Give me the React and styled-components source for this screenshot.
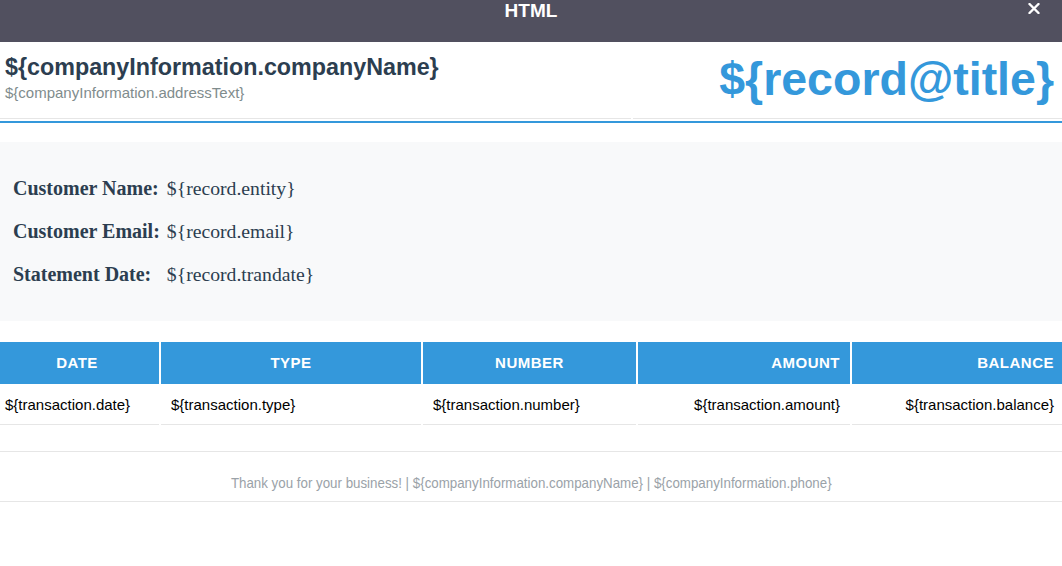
import React from "react";
import styled, { createGlobalStyle } from "styled-components";

const Global = createGlobalStyle`
  html, body { margin: 0; padding: 0; background: #ffffff; }
  body { font-family: "Liberation Sans", Arial, sans-serif; overflow: hidden; }
  * { box-sizing: border-box; }
`;

const Page = styled.div`
  width: 1062px;
  height: 566px;
  overflow: hidden;
  background: #ffffff;
`;

const TitleBar = styled.div`
  height: 42px;
  background: #51505f;
  display: grid;
  grid-template-columns: 1fr auto 1fr;
  align-items: start;
`;

const TitleText = styled.div`
  grid-column: 2;
  color: #ffffff;
  font-weight: 700;
  font-size: 19px;
  line-height: 22px;
`;

const CloseButton = styled.button`
  grid-column: 3;
  justify-self: end;
  margin: 3px 22px 0 0;
  padding: 0;
  border: 0;
  background: transparent;
  width: 12px;
  height: 11px;
  display: flex;
  cursor: pointer;
`;

const Header = styled.div`
  display: grid;
  grid-template-columns: 631px 1fr;
  column-gap: 2px;
  padding-bottom: 2px;
  border-bottom: 2px solid #3498db;
`;

const HeaderCell = styled.div`
  padding: 11px ${(p) => (p.$right ? "8px" : "5px")} ${(p) => (p.$right ? "13px" : "15px")};
  border-bottom: 1px solid #e6e6e6;
  text-align: ${(p) => (p.$right ? "right" : "left")};
`;

const CompanyName = styled.div`
  font-size: 23.3px;
  line-height: 28px;
  font-weight: 700;
  color: #2c3e50;
`;

const Address = styled.div`
  margin-top: 2px;
  font-size: 15px;
  line-height: 20px;
  color: #7f8c8d;
`;

const DocTitle = styled.div`
  font-size: 46.5px;
  line-height: 52px;
  font-weight: 700;
  color: #3498db;
`;

const InfoPanel = styled.div`
  margin-top: 19px;
  background: #f8f9fa;
  padding: 25px 13px;
  display: grid;
  grid-template-columns: max-content auto;
  column-gap: 7px;
  grid-auto-rows: 43px;
  align-items: center;
  font-family: "Liberation Serif", "Times New Roman", serif;
  color: #2c3e50;
`;

const InfoLabel = styled.div`
  font-size: 20px;
  font-weight: 700;
`;

const InfoValue = styled.div`
  font-size: 19.7px;
  font-weight: 400;
`;

const TableWrap = styled.div`
  margin: 21px -2px 0 -5px;
  display: grid;
  grid-template-columns: 164px 260px 213px 212px 1fr;
  gap: 2px;
`;

const HeadCell = styled.div`
  height: 42px;
  padding: 0 10px 1px;
  background: #3498db;
  color: #ffffff;
  font-weight: 700;
  font-size: 15px;
  letter-spacing: 0.5px;
  text-transform: uppercase;
  display: flex;
  align-items: center;
  justify-content: ${(p) => (p.$align === "right" ? "flex-end" : "center")};
`;

const DataCell = styled.div`
  padding: 10px;
  font-size: 15px;
  line-height: 18px;
  color: #000000;
  border-bottom: 1px solid #e6e6e6;
  text-align: ${(p) => p.$align || "left"};
`;

const Footer = styled.div`
  margin-top: 26px;
  border-top: 1px solid #e6e6e6;
  border-bottom: 1px solid #e6e6e6;
  padding: 22px 0 10px;
  text-align: center;
  font-size: 15px;
  line-height: 17px;
  color: #9aa2a8;
`;

const FooterText = styled.span`
  display: inline-block;
  white-space: nowrap;
  transform: scaleX(0.888);
  transform-origin: center;
`;

const columns = [
  { key: "date", label: "DATE", head: "center", align: "left" },
  { key: "type", label: "TYPE", head: "center", align: "left" },
  { key: "number", label: "NUMBER", head: "center", align: "left" },
  { key: "amount", label: "AMOUNT", head: "right", align: "right" },
  { key: "balance", label: "BALANCE", head: "right", align: "right" },
];

const info = [
  ["Customer Name:", "${record.entity}"],
  ["Customer Email:", "${record.email}"],
  ["Statement Date:", "${record.trandate}"],
];

export default function App() {
  return (
    <Page>
      <Global />
      <TitleBar>
        <TitleText>HTML</TitleText>
        <CloseButton aria-label="Close">
          <svg width="12" height="11" viewBox="0 0 12 11">
            <path d="M1.5 1 L10.5 10 M10.5 1 L1.5 10" stroke="#ffffff" strokeWidth="2.4" strokeLinecap="round" fill="none" />
          </svg>
        </CloseButton>
      </TitleBar>
      <Header>
        <HeaderCell>
          <CompanyName>{"${companyInformation.companyName}"}</CompanyName>
          <Address>{"${companyInformation.addressText}"}</Address>
        </HeaderCell>
        <HeaderCell $right>
          <DocTitle>{"${record@title}"}</DocTitle>
        </HeaderCell>
      </Header>
      <InfoPanel>
        {info.map(([l, v]) => (
          <React.Fragment key={l}>
            <InfoLabel>{l}</InfoLabel>
            <InfoValue>{v}</InfoValue>
          </React.Fragment>
        ))}
      </InfoPanel>
      <TableWrap>
        {columns.map((c) => (
          <HeadCell key={c.key} $align={c.head}>{c.label}</HeadCell>
        ))}
        {columns.map((c) => (
          <DataCell key={c.key} $align={c.align}>{"${transaction." + c.key + "}"}</DataCell>
        ))}
      </TableWrap>
      <Footer>
        <FooterText>
          {"Thank you for your business! | ${companyInformation.companyName} | ${companyInformation.phone}"}
        </FooterText>
      </Footer>
    </Page>
  );
}
